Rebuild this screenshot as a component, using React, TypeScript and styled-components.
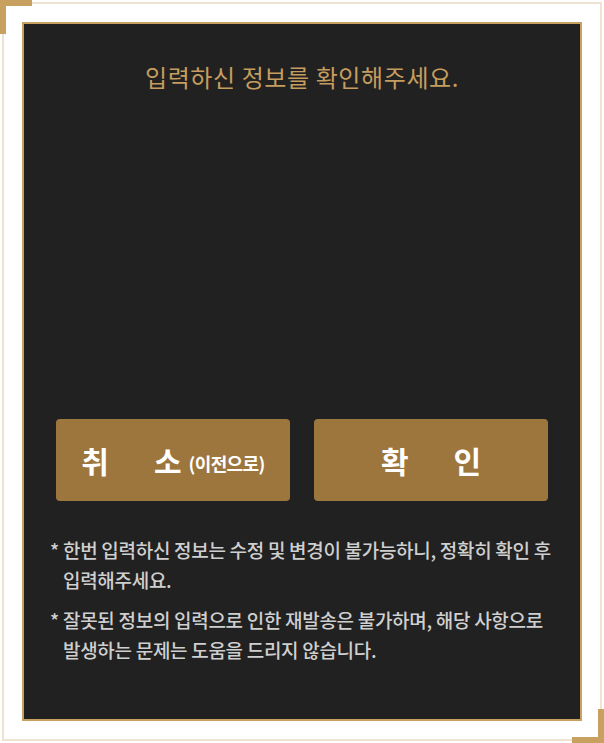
import styled, { createGlobalStyle } from "styled-components";

const GlobalStyle = createGlobalStyle`
  html, body {
    margin: 0;
    padding: 0;
    background: #ffffff;
  }
  body {
    font-family: "Noto Sans CJK KR", "Noto Sans", sans-serif;
    word-break: keep-all;
  }
`;

const Frame = styled.div`
  position: relative;
  width: 604px;
  height: 743px;
  box-sizing: border-box;
  padding: 2px;
  background: #ffffff;
`;

const FrameLine = styled.div`
  height: 100%;
  box-sizing: border-box;
  border: 2px solid #eee2d0;
  padding: 18px;
  background: #ffffff;
`;

// gold L-shaped brackets on the outer corners
const Corner = styled.span<{ pos: "tl" | "br" }>`
  position: absolute;
  z-index: 1;
  width: 32px;
  height: 34px;
  box-sizing: border-box;
  border-color: #c8a05f;
  border-style: solid;
  border-width: 0;
  ${(props) =>
    props.pos === "tl"
      ? "top: 0; left: 0; border-top-width: 6px; border-left-width: 6px;"
      : "bottom: 0; right: 0; border-bottom-width: 6px; border-right-width: 6px;"}
`;

const Panel = styled.div`
  height: 100%;
  box-sizing: border-box;
  border: 2px solid #c8a05f;
  background: #212121;
  display: flex;
  flex-direction: column;
  padding: 37px 32px 0;
`;

const Title = styled.h2`
  margin: 0;
  text-align: center;
  font-size: 24px;
  line-height: 32px;
  font-weight: 400;
  letter-spacing: 0.6px;
  color: #c59d5f;
`;

const Buttons = styled.div`
  margin-top: 326px;
  display: grid;
  grid-template-columns: 1fr 1fr;
  gap: 24px;
`;

const Button = styled.button`
  height: 82px;
  border: none;
  border-radius: 4px;
  background: #9d763e;
  color: #ffffff;
  display: flex;
  align-items: center;
  justify-content: center;
  gap: 45px;
  font-family: inherit;
  font-size: 30px;
  font-weight: 700;
  padding: 0;
  cursor: pointer;
`;

const Hint = styled.small`
  font-size: 18px;
  font-weight: 700;
  letter-spacing: -0.6px;
  margin-left: -38px;
  align-self: center;
  padding-top: 6px;
`;

const Notes = styled.ul`
  list-style: none;
  margin: 34px -10px 0 -6px;
  padding: 0;
  display: flex;
  flex-direction: column;
  gap: 10px;
`;

const Note = styled.li`
  display: flex;
  font-size: 19px;
  line-height: 30px;
  font-weight: 500;
  letter-spacing: -0.3px;
  color: #cfcfcf;
`;

const Star = styled.span`
  flex: none;
  width: 13px;
`;

export default function App() {
  return (
    <>
      <GlobalStyle />
      <Frame>
        <Corner pos="tl" />
        <Corner pos="br" />
        <FrameLine>
          <Panel>
            <Title>입력하신 정보를 확인해주세요.</Title>
            <Buttons>
              <Button>
                <span>취</span>
                <span>소</span>
                <Hint>(이전으로)</Hint>
              </Button>
              <Button>
                <span>확</span>
                <span>인</span>
              </Button>
            </Buttons>
            <Notes>
              <Note>
                <Star>*</Star>
                <span>
                  한번 입력하신 정보는 수정 및 변경이 불가능하니, 정확히 확인 후
                  입력해주세요.
                </span>
              </Note>
              <Note>
                <Star>*</Star>
                <span>
                  잘못된 정보의 입력으로 인한 재발송은 불가하며, 해당 사항으로
                  발생하는 문제는 도움을 드리지 않습니다.
                </span>
              </Note>
            </Notes>
          </Panel>
        </FrameLine>
      </Frame>
    </>
  );
}
